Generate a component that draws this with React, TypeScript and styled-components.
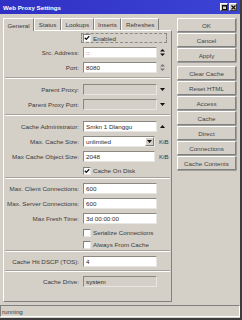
import React from 'react';
import styled, { createGlobalStyle } from 'styled-components';

const GlobalStyle = createGlobalStyle`
  html, body {
    margin: 0;
    padding: 0;
    background: #d4d0c8;
  }
  body {
    font-family: "Liberation Sans", Arial, sans-serif;
  }
`

const Window = styled.div`
  width: 242px;
  height: 320px;
  box-sizing: border-box;
  background: #d4d0c8;
  border-right: 2px solid #3c3c3c;
  border-bottom: 2px solid #3c3c3c;
  display: flex;
  flex-direction: column;
  font-size: 6.25px;
  color: #3a3a3a;
`

const TitleBar = styled.div`
  height: 14px;
  flex: none;
  display: flex;
  align-items: center;
  padding: 0 3px 0 3px;
  background: linear-gradient(to right, #3030c4, #3c44d4);
  color: #fff;
  font-weight: bold;
  font-size: 6.2px;
`

const Title = styled.span`
  flex: 1;
`

const TitleButton = styled.div`
  width: 8px;
  height: 8px;
  box-sizing: border-box;
  background: #d4d0c8;
  border: 1px solid;
  border-color: #fff #404040 #404040 #fff;
  display: flex;
  align-items: center;
  justify-content: center;
  margin-left: 1px;
`

const Main = styled.div`
  flex: 1;
  display: flex;
  gap: 5px;
  padding: 3px 0 0 3px;
  min-height: 0;
`

const TabArea = styled.div`
  width: 169px;
  display: flex;
  flex-direction: column;
`

const TabRow = styled.div`
  height: 13px;
  display: flex;
  align-items: flex-end;
`

const Tab = styled.div<{ $active?: boolean }>`
  height: ${p => (p.$active ? '13px' : '12px')};
  box-sizing: border-box;
  padding: 0 3.5px;
  display: flex;
  align-items: center;
  border: 1px solid;
  border-bottom: none;
  border-color: #fff #808080 transparent #fff;
  background: #d4d0c8;
  color: #3a3a3a;
  margin-bottom: ${p => (p.$active ? '-1px' : '0')};
  position: relative;
  z-index: ${p => (p.$active ? 1 : 0)};
`

const Panel = styled.div`
  flex: 1;
  box-sizing: border-box;
  border: 1px solid;
  border-color: #fff #808080 #808080 #fff;
  display: flex;
  flex-direction: column;
`

const Section = styled.div<{ $top?: number; $bottom?: number }>`
  display: flex;
  flex-direction: column;
  gap: 4px;
  padding-top: ${p => p.$top ?? 5}px;
  padding-bottom: ${p => p.$bottom ?? 4}px;
`

const Separator = styled.div`
  height: 0;
  border-top: 1px solid #a6a29a;
  border-bottom: 1px solid #fff;
  margin: 0 1px;
`

const Row = styled.div<{ $h?: number; $tight?: boolean }>`
  display: grid;
  grid-template-columns: 75px 1fr;
  column-gap: 4px;
  align-items: center;
  height: ${p => p.$h ?? 11}px;
  margin-top: ${p => (p.$tight ? '-1px' : '0')};
`

const Label = styled.span`
  text-align: right;
  white-space: nowrap;
`

const Field = styled.div`
  display: flex;
  align-items: center;
  gap: 3px;
`

const Input = styled.div<{ $w?: number; $disabled?: boolean }>`
  width: ${p => p.$w ?? 74}px;
  height: 11px;
  box-sizing: border-box;
  border: 1px solid;
  border-color: #8c8880 #e8e6e2 #e8e6e2 #8c8880;
  background: ${p => (p.$disabled ? '#d4d0c8' : '#fff')};
  display: flex;
  align-items: center;
  padding-left: 2px;
  color: #2a2a2a;
  overflow: hidden;
  white-space: nowrap;
`

const InputText = styled.span`
  flex: 1;
`

const DropButton = styled.div`
  width: 9px;
  height: 9px;
  box-sizing: border-box;
  border: 1px solid;
  border-color: #fff #808080 #808080 #fff;
  background: #d4d0c8;
  display: flex;
  align-items: center;
  justify-content: center;
`

const Unit = styled.span`
  margin-left: 1px;
`

const CheckLine = styled.div<{ $focus?: boolean }>`
  display: flex;
  align-items: center;
  gap: 2px;
  height: 100%;
  box-sizing: border-box;
  margin-left: ${p => (p.$focus ? '-2px' : '0')};
  padding-left: ${p => (p.$focus ? '1px' : '0')};
  width: ${p => (p.$focus ? '86px' : 'auto')};
  border: ${p => (p.$focus ? '1px dashed #8a8a8a' : 'none')};
`

const Box = styled.div`
  width: 8px;
  height: 8px;
  box-sizing: border-box;
  border: 1px solid;
  border-color: #808080 #e8e6e2 #e8e6e2 #808080;
  background: #fff;
  display: flex;
  align-items: center;
  justify-content: center;
`

const ButtonColumn = styled.div`
  width: 59px;
  display: flex;
  flex-direction: column;
  gap: 1px;
  padding-top: 1px;
`

const Button = styled.div<{ $gapTop?: boolean }>`
  height: 14px;
  box-sizing: border-box;
  border: 1px solid;
  border-color: #fff #808080 #808080 #fff;
  box-shadow: 0.5px 0.5px 0 #6a6a6a;
  display: flex;
  align-items: center;
  justify-content: center;
  color: #444;
  margin-top: ${p => (p.$gapTop ? '3px' : '0')};
`

const StatusBar = styled.div`
  height: 12px;
  flex: none;
  margin: 3px 0 1px 0;
  box-sizing: border-box;
  border: 1px solid;
  border-color: #808080 #fff #fff #808080;
  display: flex;
  align-items: center;
  padding-left: 1px;
`

const Spin = ({ color = '#111' }: { color?: string }) => (
  <svg width="5" height="9" viewBox="0 0 5 9">
    <polygon points="0,3.5 2.5,1 5,3.5" fill={color} />
    <polygon points="0,5.5 2.5,8 5,5.5" fill={color} />
  </svg>
)

const Down = () => (
  <svg width="5" height="3" viewBox="0 0 5 3">
    <polygon points="0,0 5,0 2.5,3" fill="#111" />
  </svg>
)

const Up = () => (
  <svg width="5" height="3" viewBox="0 0 5 3">
    <polygon points="0,3 5,3 2.5,0" fill="#111" />
  </svg>
)

const Tick = () => (
  <svg width="6" height="6" viewBox="0 0 6 6">
    <polyline points="0.8,2.8 2.3,4.4 5.2,1.2" fill="none" stroke="#111" strokeWidth="1.3" />
  </svg>
)

const TextRow = ({ label, value, w, disabled, icon }: { label: string; value: string; w?: number; disabled?: boolean; icon?: React.ReactNode }) => (
  <Row>
    <Label>{label}</Label>
    <Field>
      <Input $w={w} $disabled={disabled}>
        <InputText>{value}</InputText>
      </Input>
      {icon}
    </Field>
  </Row>
)

const CheckRow = ({ label, checked, focus, tight }: { label: string; checked?: boolean; focus?: boolean; tight?: boolean }) => (
  <Row $h={focus ? 10 : 9} $tight={tight}>
    <span />
    <CheckLine $focus={focus}>
      <Box>{checked && <Tick />}</Box>
      <span>{label}</span>
    </CheckLine>
  </Row>
)

const tabs = ['General', 'Status', 'Lookups', 'Inserts', 'Refreshes'];
const buttons = ['Reset HTML', 'Access', 'Cache', 'Direct', 'Connections', 'Cache Contents'];

const App: React.FC = () => {
  return (
    <Window>
      <GlobalStyle />
      <TitleBar>
        <Title>Web Proxy Settings</Title>
        <TitleButton>
          <svg width="5" height="5" viewBox="0 0 5 5">
            <rect x="0.5" y="0.5" width="4" height="4" fill="none" stroke="#111" strokeWidth="1" />
            <line x1="0" y1="1" x2="5" y2="1" stroke="#111" strokeWidth="1" />
          </svg>
        </TitleButton>
        <TitleButton>
          <svg width="5" height="5" viewBox="0 0 5 5">
            <path d="M0.5 0.5 L4.5 4.5 M4.5 0.5 L0.5 4.5" stroke="#111" strokeWidth="1.3" />
          </svg>
        </TitleButton>
      </TitleBar>
      <Main>
        <TabArea>
          <TabRow>
            {tabs.map((t, i) => (
              <Tab key={t} $active={i === 0}>{t}</Tab>
            ))}
          </TabRow>
          <Panel>
            <Section $top={2}>
              <CheckRow label="Enabled" checked focus />
              <TextRow label="Src. Address:" value="::" icon={<Spin />} />
              <TextRow label="Port:" value="8080" icon={<Spin color="#777" />} />
            </Section>
            <Separator />
            <Section>
              <TextRow label="Parent Proxy:" value="" disabled icon={<Down />} />
              <TextRow label="Parent Proxy Port:" value="" disabled icon={<Down />} />
            </Section>
            <Separator />
            <Section $bottom={2}>
              <TextRow label="Cache Administrator:" value="Smkn 1 Dlanggu" icon={<Up />} />
              <Row>
                <Label>Max. Cache Size:</Label>
                <Field>
                  <Input $w={72} style={{ paddingRight: 0 }}>
                    <InputText>unlimited</InputText>
                    <DropButton><Down /></DropButton>
                  </Input>
                  <Unit>KiB</Unit>
                </Field>
              </Row>
              <Row>
                <Label>Max Cache Object Size:</Label>
                <Field>
                  <Input $w={72}><InputText>2048</InputText></Input>
                  <Unit>KiB</Unit>
                </Field>
              </Row>
              <CheckRow label="Cache On Disk" checked />
            </Section>
            <Separator />
            <Section $top={4} $bottom={1}>
              <TextRow label="Max. Client Connections:" value="600" />
              <TextRow label="Max. Server Connections:" value="600" />
              <TextRow label="Max Fresh Time:" value="3d 00:00:00" />
              <CheckRow label="Serialize Connections" />
              <CheckRow label="Always From Cache" tight />
            </Section>
            <Separator />
            <Section $top={4} $bottom={3}>
              <TextRow label="Cache Hit DSCP (TOS):" value="4" />
            </Section>
            <Separator />
            <Section $top={4}>
              <TextRow label="Cache Drive:" value="system" disabled />
            </Section>
          </Panel>
        </TabArea>
        <ButtonColumn>
          <Button>OK</Button>
          <Button>Cancel</Button>
          <Button>Apply</Button>
          <Button $gapTop>Clear Cache</Button>
          {buttons.map(b => (
            <Button key={b}>{b}</Button>
          ))}
        </ButtonColumn>
      </Main>
      <StatusBar>running</StatusBar>
    </Window>
  );
}

export default App;
